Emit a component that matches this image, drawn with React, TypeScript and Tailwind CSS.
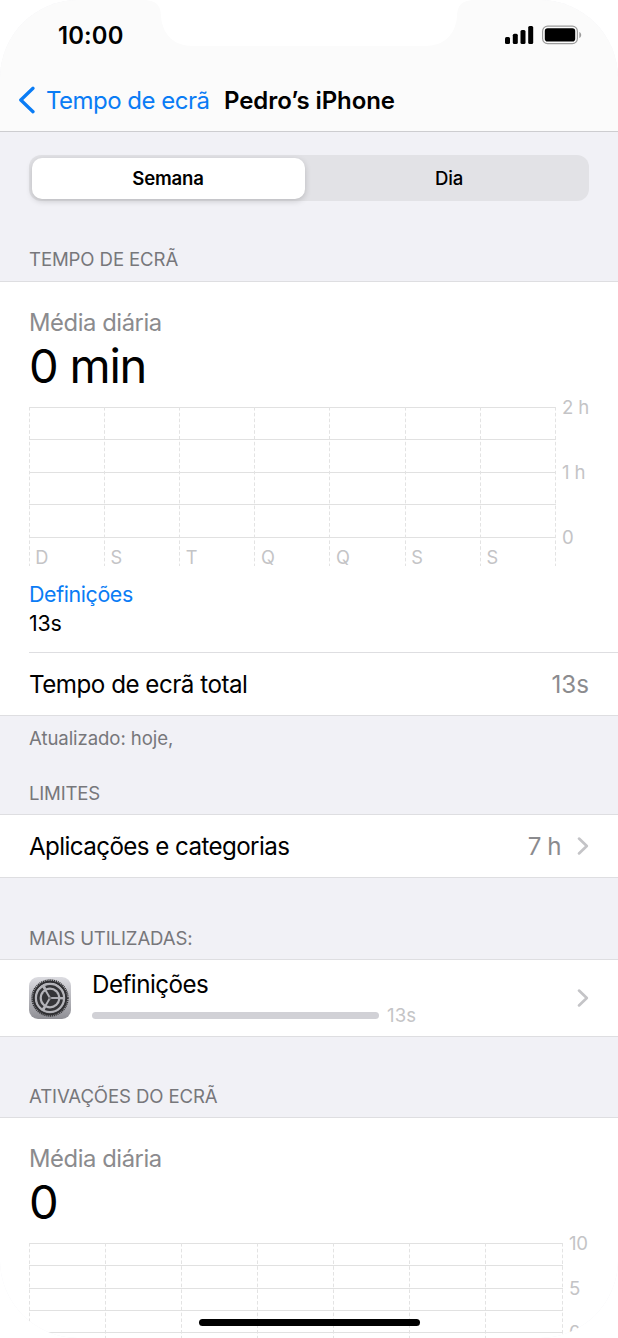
import React from 'react';

interface ChartProps {
  width: number;
  height: number;
  columns: number;
  step: number;
  rows: number[];
  yLabels: { text: string; y: number }[];
  xLabels?: string[];
  dashEnd: number;
}

const UsageChart: React.FC<ChartProps> = ({ width, height, columns, step, rows, yLabels, xLabels = [], dashEnd }) => {
  return (
    <svg width={589} height={height} viewBox={`0 0 589 ${height}`} className="block overflow-visible font-['Inter',sans-serif]">
      {rows.map((y) => (
        <line key={y} x1={0} x2={width} y1={y + 0.5} y2={y + 0.5} stroke="#e1e1e1" />
      ))}
      {Array.from({ length: columns + 1 }, (_, i) => {
        const x = Math.floor(i * step) + 0.5;
        return <line key={i} x1={x} x2={x} y1={0} y2={dashEnd} stroke="#e3e3e3" strokeDasharray="3.6 2.2" />;
      })}
      {xLabels.map((label, i) => (
        <text key={i} x={i * step + 6.3} y={156.5} fontSize={18.2} fill="#c4c4c6">{label}</text>
      ))}
      {yLabels.map((label) => (
        <text key={label.text} x={width + 6} y={label.y + 7} fontSize={18.6} letterSpacing={-0.2} fill="#c4c4c6">{label.text}</text>
      ))}
    </svg>
  );
};

const Chevron: React.FC = () => (
  <svg width="12" height="20" viewBox="0 0 12 20" fill="none" stroke="#c4c4c7" strokeWidth="2.7" strokeLinecap="round" strokeLinejoin="round">
    <path d="M2 2.6 L9.8 10 L2 17.4" />
  </svg>
);

const SettingsIcon: React.FC = () => (
  <svg width="42" height="42" viewBox="0 0 42 42" fill="none">
    <defs>
      <linearGradient id="plate" x1="0" y1="0" x2="0" y2="1">
        <stop offset="0" stopColor="#dcdce1" />
        <stop offset="1" stopColor="#8f8f95" />
      </linearGradient>
    </defs>
    <rect width="42" height="42" rx="9" fill="url(#plate)" />
    {/* toothed outer ring */}
    <circle cx="21" cy="21" r="17.8" stroke="#37373a" strokeWidth="1.8" strokeDasharray="1.2 0.7" />
    <circle cx="21" cy="21" r="16.2" stroke="#2f2f32" strokeWidth="2" />
    <circle cx="21" cy="21" r="14.9" fill="#b4b4b9" />
    {/* dark wheel with its light inner rim */}
    <circle cx="21" cy="21" r="11.7" stroke="#343437" strokeWidth="2.6" strokeDasharray="21.7 2.8" strokeDashoffset="-1.4" />
    <circle cx="21" cy="21" r="8.2" fill="#343437" />
    <g stroke="#b4b4b9" strokeWidth="1.9">
      <path d="M21 21 L35 21" />
      <path d="M21 21 L14 8.9" />
      <path d="M21 21 L14 33.1" />
    </g>
    <circle cx="21" cy="21" r="1.5" fill="#77777b" />
  </svg>
);

const SectionHeader: React.FC<{ children: React.ReactNode; className: string }> = ({ children, className }) => (
  <h2 className={`flex items-center border-b border-[#dedee1] pl-[29px] text-[18.6px] leading-none text-[#77777b] ${className}`}>
    {children}
  </h2>
);

const StatusBar: React.FC = () => (
  <div className="relative flex h-[70px] justify-between">
    <svg className="absolute left-[143px] top-0" width="332" height="46" viewBox="0 0 332 46">
      <path d="M0 0 C13 0 18 5 18 17 C20 35 31 46 50 46 H282 C301 46 312 35 314 17 C314 5 319 0 332 0 Z" fill="#fff" />
    </svg>
    <span className="mt-[24px] ml-[58px] text-[23.8px] leading-[24px] font-semibold tracking-[0.15px]">10:00</span>
    <svg className="mt-[25px] mr-[35px]" width="79" height="20" viewBox="0 0 79 20">
      <rect x="1" y="12" width="5" height="7" rx="1.5" />
      <rect x="8.8" y="8.8" width="5" height="10.2" rx="1.5" />
      <rect x="16.5" y="5" width="5" height="14" rx="1.5" />
      <rect x="24.2" y="1" width="5" height="18" rx="1.5" />
      <rect x="38.6" y="1.2" width="34.8" height="17.4" rx="5" fill="none" stroke="#9c9c9c" strokeWidth="1.2" />
      <rect x="40.8" y="3.3" width="30.4" height="13.2" rx="2.8" />
      <path d="M75.3 7 C77.8 8 77.8 12 75.3 13 Z" fill="#9c9c9c" />
    </svg>
  </div>
);

export default function App() {
  return (
    <div className="h-[1338px] w-[618px] overflow-hidden bg-white">
      <div className="relative flex h-[1338px] w-[618px] flex-col overflow-hidden rounded-[78px] bg-[#f1f1f6] font-['Inter',sans-serif] text-black">
        <header className="h-[132px] border-b border-[#cdcdd0] bg-[#fbfbfb]">
          <StatusBar />
          <div className="flex h-[60px] items-center pl-[18px] text-[24px] leading-none">
            <svg width="18" height="28" viewBox="0 0 18 28" fill="none" stroke="#0a7cf5" strokeWidth="3.3" strokeLinecap="round" strokeLinejoin="round">
              <path d="M15 2.3 L2.8 14 L15 25.7" />
            </svg>
            <span className="ml-[10px] w-[178px] pt-px whitespace-nowrap tracking-[-0.52px] text-[#0a7cf5]">Tempo de ecrã</span>
            <h1 className="pt-px whitespace-nowrap font-semibold tracking-[-0.08px]">Pedro’s iPhone</h1>
          </div>
        </header>

        <div className="mx-[29px] mt-[23px] flex h-[46px] shrink-0 rounded-[12px] bg-[#e2e2e6] p-[2.5px] text-[18.6px]">
          <button className="w-[273px] rounded-[10px] bg-white pt-px font-semibold tracking-[-0.2px] shadow-[0_2px_6px_rgba(0,0,0,0.18)]">Semana</button>
          <button className="flex-1 pt-px pl-[7px] font-medium tracking-[-0.2px]">Dia</button>
        </div>

        <SectionHeader className="h-[81px] shrink-0 pt-[37px] tracking-[-0.12px]">TEMPO DE ECRÃ</SectionHeader>

        <section className="h-[434px] shrink-0 border-b border-[#dedee1] bg-white pl-[29px]">
          <p className="pt-[29px] text-[23.8px] leading-[24px] tracking-[-0.43px] text-[#8b8b8e]">Média diária</p>
          <p className="mt-[6px] text-[47px] leading-[50px] tracking-[-1.2px]">0 min</p>
          <div className="mt-[16px] h-[174px]">
            <UsageChart
              width={527}
              height={160}
              columns={7}
              step={75.2}
              rows={[0, 32, 65, 97, 130]}
              xLabels={['D', 'S', 'T', 'Q', 'Q', 'S', 'S']}
              yLabels={[{ text: '2 h', y: 0 }, { text: '1 h', y: 65 }, { text: '0', y: 130 }]}
              dashEnd={159}
            />
          </div>
          <p className="text-[21.4px] leading-[26px] tracking-[-0.38px] text-[#0a7cf5]">Definições</p>
          <p className="mt-[3px] text-[21.4px] leading-[26px] tracking-[-0.2px]">13s</p>
          <div className="mt-[16px] flex h-[64px] items-center justify-between border-t border-[#dedee1] pt-px pr-[29px] text-[24.2px] leading-none tracking-[-0.5px]">
            <span>Tempo de ecrã total</span>
            <span className="tracking-[0px] text-[#8b8b8e]">13s</span>
          </div>
        </section>

        <p className="mt-[9px] ml-[29px] h-[27px] shrink-0 text-[18.6px] leading-[26px] tracking-[-0.08px] text-[#77777b]">Atualizado: hoje,</p>
        <SectionHeader className="h-[63px] shrink-0 pt-[21px] tracking-[-0.2px]">LIMITES</SectionHeader>
        <div className="flex h-[63px] shrink-0 items-center border-b border-[#dedee1] bg-white px-[29px] text-[24.2px] leading-none tracking-[-0.6px]">
          <span className="flex-1 pt-[2px]">Aplicações e categorias</span>
          <span className="mr-[16px] pt-[2px] tracking-[-0.5px] text-[#8b8b8e]">7 h</span>
          <Chevron />
        </div>

        <SectionHeader className="h-[82px] shrink-0 pt-[39px] tracking-[-0.13px]">MAIS UTILIZADAS:</SectionHeader>
        <div className="flex h-[77px] shrink-0 items-center border-b border-[#dedee1] bg-white px-[29px]">
          <SettingsIcon />
          <div className="ml-[21px] flex-1">
            <p className="text-[24.2px] leading-[30px] tracking-[-0.55px]">Definições</p>
            <div className="mt-[5px] mb-px flex h-[20px] items-center">
              <div className="h-[7px] w-[287px] rounded-full bg-[#d1d1d6]" />
              <span className="ml-[8px] text-[18.6px] leading-none tracking-[0.1px] text-[#c4c4c6]">13s</span>
            </div>
          </div>
          <Chevron />
        </div>

        <SectionHeader className="h-[81px] shrink-0 pt-[38px] tracking-[-0.12px]">ATIVAÇÕES DO ECRÃ</SectionHeader>
        <section className="h-[220px] shrink-0 bg-white pl-[29px]">
          <p className="pt-[29px] text-[23.8px] leading-[24px] tracking-[-0.43px] text-[#8b8b8e]">Média diária</p>
          <p className="mt-[6px] text-[47px] leading-[50px]">0</p>
          <div className="mt-[16px]">
            <UsageChart
              width={534}
              height={95}
              columns={7}
              step={76.15}
              rows={[0, 22, 45, 67, 89]}
              yLabels={[{ text: '10', y: 0 }, { text: '5', y: 45 }, { text: '0', y: 89 }]}
              dashEnd={95}
            />
          </div>
        </section>

        {/* Home indicator */}
        <div className="absolute bottom-[12px] left-[199px] h-[7px] w-[221px] rounded-full bg-black" />
      </div>
    </div>
  );
}
